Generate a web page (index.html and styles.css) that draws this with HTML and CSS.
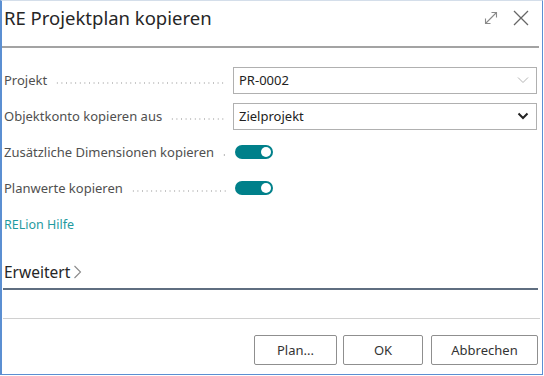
FILE: index.html
```html
<!DOCTYPE html>
<html lang="de">
<head>
<meta charset="utf-8">
<title>RE Projektplan kopieren</title>
<link rel="stylesheet" href="styles.css">
</head>
<body>
<div class="dialog">
  <div class="header">
    <h1 class="title">RE Projektplan kopieren</h1>
    <div class="header-icons">
      <svg class="icon-expand" width="16" height="16" viewBox="0 0 16 16">
        <path d="M2.5 13.5 L13.5 2.5 M8.5 2.5 H13.5 V7.5 M2.5 8.5 V13.5 H7.5" fill="none" stroke="#8a8a8a" stroke-width="1.1"/>
      </svg>
      <svg class="icon-close" width="18" height="18" viewBox="0 0 18 18">
        <path d="M2 2 L16 16 M16 2 L2 16" fill="none" stroke="#666" stroke-width="1.3"/>
      </svg>
    </div>
  </div>
  <div class="rule-top"></div>

  <div class="fields">
    <div class="row">
      <div class="label"><span class="label-text">Projekt</span><span class="leader"></span></div>
      <div class="control">
        <div class="input">
          <span class="value">PR-0002</span>
          <svg width="12" height="8" viewBox="0 0 12 8"><path d="M1 1.5 L6 6.5 L11 1.5" fill="none" stroke="#b4b4b4" stroke-width="1"/></svg>
        </div>
      </div>
    </div>
    <div class="row">
      <div class="label"><span class="label-text">Objektkonto kopieren aus</span><span class="leader"></span></div>
      <div class="control">
        <div class="input">
          <span class="value">Zielprojekt</span>
          <svg width="12" height="8" viewBox="0 0 12 8"><path d="M1.5 1.5 L6 6 L10.5 1.5" fill="none" stroke="#222" stroke-width="2"/></svg>
        </div>
      </div>
    </div>
    <div class="row">
      <div class="label"><span class="label-text">Zusätzliche Dimensionen kopieren</span><span class="leader"></span></div>
      <div class="control"><span class="toggle"><span class="knob"></span></span></div>
    </div>
    <div class="row">
      <div class="label"><span class="label-text">Planwerte kopieren</span><span class="leader"></span></div>
      <div class="control"><span class="toggle"><span class="knob"></span></span></div>
    </div>
  </div>

  <a class="help" href="#">RELion Hilfe</a>

  <div class="section">
    <span class="section-title">Erweitert</span>
    <svg width="9" height="14" viewBox="0 0 9 14"><path d="M1.5 1 L7.5 7 L1.5 13" fill="none" stroke="#8a8a8a" stroke-width="1.1"/></svg>
  </div>
  <div class="rule-section"></div>

  <div class="spacer"></div>
  <div class="rule-footer"></div>
  <div class="footer">
    <button class="btn btn-plan">Plan...</button>
    <button class="btn btn-ok">OK</button>
    <button class="btn btn-cancel">Abbrechen</button>
  </div>
</div>
</body>
</html>
```
FILE: styles.css
```css
html, body {
  margin: 0;
  padding: 0;
  background: #ffffff;
}

body {
  font-family: "Noto Sans", "Open Sans", sans-serif;
  color: #333;
}

.dialog {
  box-sizing: border-box;
  width: 543px;
  height: 375px;
  border: 1px solid #5b8fd2;
  border-left-width: 2px;
  border-top-color: #d4deea;
  display: flex;
  flex-direction: column;
  background: #fff;
}

.header {
  display: flex;
  align-items: center;
  justify-content: space-between;
  height: 34px;
  padding: 0 12px 0 2px;
}

.title {
  margin: 0;
  font-size: 18.5px;
  font-weight: 400;
  color: #262626;
  line-height: 24px;
}

.header-icons {
  display: flex;
  align-items: center;
  gap: 13px;
}

.rule-top {
  height: 2px;
  margin: 11px 3px 0 0;
  background: #a3a3a3;
}

.fields {
  display: flex;
  flex-direction: column;
  padding-top: 14px;
}

.row {
  display: flex;
  align-items: center;
  height: 36px;
}

.label {
  display: flex;
  align-items: baseline;
  width: 222px;
  margin-right: 7px;
  padding-left: 2px;
  font-size: 13px;
  color: #505050;
}

.label-text {
  white-space: nowrap;
}

.leader {
  flex: 1;
  height: 2px;
  margin-left: 8px;
  background-image: radial-gradient(circle, #c2c2c2 0.7px, transparent 1px);
  background-size: 4.6px 2px;
  background-repeat: repeat-x;
  transform: translateY(-1px);
}

.control {
  flex: none;
  width: 304px;
  display: flex;
  align-items: center;
}

.input {
  box-sizing: border-box;
  width: 304px;
  height: 27px;
  border: 1px solid #b0b0b0;
  display: flex;
  align-items: center;
  justify-content: space-between;
  padding: 0 7px 0 5px;
  font-size: 13px;
  color: #222;
}

.toggle {
  position: relative;
  display: inline-block;
  width: 38px;
  height: 14px;
  border-radius: 7px;
  background: #00808a;
  margin-left: 2px;
}

.knob {
  position: absolute;
  right: 2px;
  top: 2px;
  width: 10px;
  height: 10px;
  border-radius: 50%;
  background: #fff;
}

.help {
  display: block;
  margin: 11px 0 0 2px;
  font-size: 12.5px;
  color: #1f9aa0;
  text-decoration: none;
  line-height: 16px;
}

.section {
  display: flex;
  align-items: center;
  gap: 3px;
  margin: 28px 0 0 2px;
  height: 22px;
}

.section-title {
  font-size: 15.5px;
  color: #262626;
}

.rule-section {
  height: 2px;
  margin: 5px 4px 0 1px;
  background: #5f6e80;
}

.spacer {
  height: 28px;
}

.rule-footer {
  height: 1px;
  margin: 0 2px 0 1px;
  background: #d0d0d0;
}

.footer {
  display: flex;
  justify-content: flex-end;
  gap: 8px;
  padding: 16px 4px 0 0;
}

.btn {
  box-sizing: border-box;
  height: 30px;
  border: 1px solid #8f8f8f;
  border-radius: 2px;
  background: #fff;
  font-family: "Noto Sans", "Open Sans", sans-serif;
  font-size: 13px;
  color: #333;
  padding: 0;
}

.btn-plan { width: 83px; margin-right: -2px; }
.btn-ok { width: 80px; }
.btn-cancel { width: 107px; }
```
